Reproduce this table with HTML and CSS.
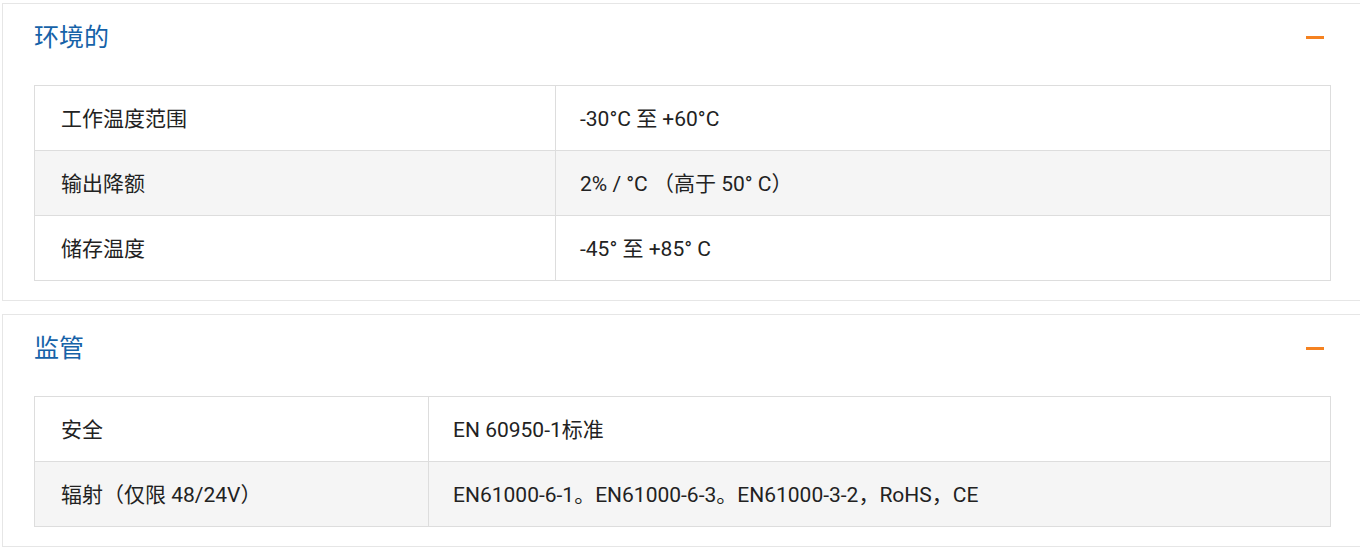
FILE: index.html
```html
<!DOCTYPE html>
<html lang="zh-CN">
<head>
  <meta charset="UTF-8">
  <title>规格参数</title>
  <link rel="stylesheet" href="styles.css">
</head>
<body>
  <div class="spec-panel">
    <div class="spec-head">
      <h3>环境的</h3>
      <span class="toggle"></span>
    </div>
    <table class="spec-table">
      <tr><td class="col-env">工作温度范围</td><td>-30°C 至 +60°C</td></tr>
      <tr><td>输出降额</td><td>2% / °C （高于 50° C）</td></tr>
      <tr><td>储存温度</td><td>-45° 至 +85° C</td></tr>
    </table>
  </div>

  <div class="spec-panel">
    <div class="spec-head">
      <h3>监管</h3>
      <span class="toggle"></span>
    </div>
    <table class="spec-table">
      <tr><td class="col-reg">安全</td><td>EN 60950-1标准</td></tr>
      <tr><td>辐射（仅限 48/24V）</td><td>EN61000-6-1。EN61000-6-3。EN61000-3-2，RoHS，CE</td></tr>
    </table>
  </div>
</body>
</html>
```

FILE: styles.css
```css
body { margin: 0; padding: 3px 0 0 2px; background: #fff; font-family: Roboto, "Noto Sans CJK SC", sans-serif; color: #222; overflow: hidden; }
.spec-panel { width: 1297px; border: 1px solid #e6e6e6; padding: 0 31px 19px 31px; margin-bottom: 13px; }
.spec-head { display: flex; justify-content: space-between; align-items: center; padding-top: 17px; height: 34px; margin-bottom: 30px; }
.spec-head h3 { margin: 0; font-size: 25px; font-weight: 400; line-height: 34px; color: #1662a8; }
.toggle { width: 18px; height: 3px; background: #f58220; margin-right: 7px; margin-top: -2px; }
.spec-table { width: 100%; border-collapse: collapse; font-size: 21px; }
.spec-table td { border: 1px solid #ddd; height: 65px; box-sizing: border-box; padding: 0 25px 3px 26px; vertical-align: middle; }
.spec-table td + td { padding-left: 24px; }
.spec-table tr:nth-child(even) td { background: #f5f5f5; }
.col-env { width: 521px; }
.col-reg { width: 394px; }
```
